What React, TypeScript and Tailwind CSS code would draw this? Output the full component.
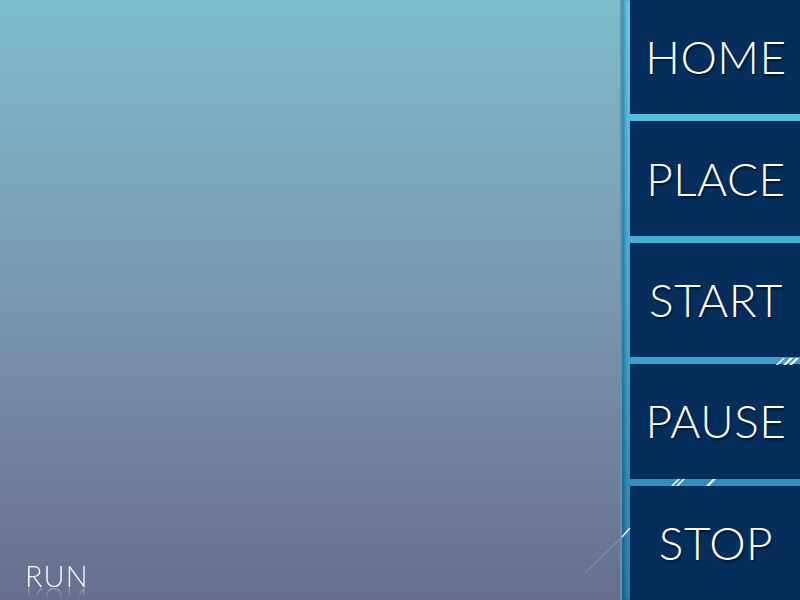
import React from "react";

const items = ["HOME", "PLACE", "START", "PAUSE", "STOP"];

export default function App() {
  return (
    <div className="relative flex w-[800px] h-[600px] overflow-hidden font-['Lato',sans-serif]">
      <div className="flex w-[622px] h-full flex-col justify-end bg-gradient-to-b from-[#7cbdcc] via-[#7a97ad] to-[#676e8e] border-r-2 border-[#6f8ea6] pl-[25px] pb-[10px]">
        <div className="text-[29px] leading-none font-light tracking-[1px] text-[#f4f6fa] [-webkit-box-reflect:below_-5px_linear-gradient(transparent_55%,rgba(255,255,255,0.5))]">
          RUN
        </div>
      </div>
      <div className="flex flex-1 flex-col gap-[7px] bg-gradient-to-b from-[#5ccbe7] via-[#3fa9d2] to-[#2a7dac] pl-[8px] shadow-[inset_3px_0_3px_rgba(0,40,70,0.35)]">
        {items.map((t) => (
          <div
            key={t}
            className="flex flex-1 items-center justify-center bg-[#052e5c] pl-[2px] text-[46px] leading-none font-light tracking-[0.5px] text-white [text-shadow:1px_2px_2px_rgba(0,0,0,0.55)]"
          >
            {t}
          </div>
        ))}
      </div>
      <svg className="pointer-events-none absolute left-0 top-0" width="800" height="600" viewBox="0 0 800 600">
        <line x1="585" y1="573" x2="622" y2="537" stroke="rgba(255,255,255,0.25)" strokeWidth="1" />
        <line x1="622" y1="537" x2="630" y2="528" stroke="rgba(255,255,255,0.9)" strokeWidth="1.5" />
        <polygon points="776,365 778,365 785,358 783,358" fill="white" />
        <polygon points="783,365 786,365 793,358 790,358" fill="white" />
        <polygon points="789,365 792,365 799,358 796,358" fill="white" />
        <polygon points="671,486 673,486 680,479 678,479" fill="white" />
        <polygon points="676,486 678,486 685,479 683,479" fill="white" />
        <polygon points="706,486 709,486 716,479 713,479" fill="white" />
      </svg>
    </div>
  );
}
